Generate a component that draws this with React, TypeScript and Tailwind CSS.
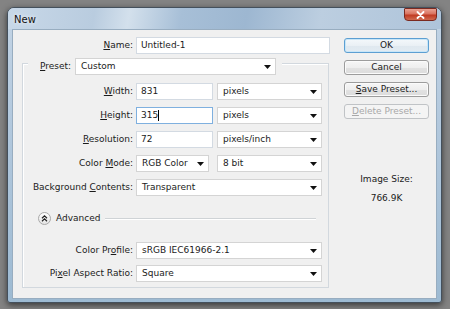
import React from "react";

function Tri() {
  return (
    <svg width="7" height="4" viewBox="0 0 7 4" className="shrink-0">
      <path d="M0 0H7L3.5 4Z" fill="#111" />
    </svg>
  );
}

function Lbl({ a, u, b, cls }: { a?: string; u: string; b?: string; cls: string }) {
  return (
    <div className={cls}>
      {a}
      <span className="underline underline-offset-[1px]">{u}</span>
      {b}
    </div>
  );
}

function Input({ cls, text, focus }: { cls: string; text: string; focus?: boolean }) {
  return (
    <div
      className={
        cls +
        " h-[17px] bg-white border flex items-center pl-[4px] " +
        (focus ? "border-[#7fb0df]" : "border-[#d3dae2]")
      }
    >
      <span>{text}</span>
      {focus && <span className="w-px h-[11px] bg-black" />}
    </div>
  );
}

function Select({ cls, text }: { cls: string; text: string }) {
  return (
    <div className={cls + " h-[17px] bg-white border border-[#d4d4d4] flex items-center justify-between pl-[5px] pr-[4px]"}>
      <span>{text}</span>
      <Tri />
    </div>
  );
}

function Btn({ children, variant }: { children: React.ReactNode; variant?: "default" | "disabled" }) {
  const base =
    "w-[85px] h-[15px] rounded-[3px] border flex items-center justify-center leading-none ";
  if (variant === "default")
    return (
      <div className={base + "border-[#5c9fd2] bg-[linear-gradient(#f4f8fb_0%,#eaf0f5_50%,#dfe8ef_51%,#e2ebf2_100%)] shadow-[inset_0_0_0_1px_#c8e6f8]"}>
        {children}
      </div>
    );
  if (variant === "disabled")
    return <div className={base + "border-[#c0c3c6] bg-[#f4f4f4] text-[#a8a8a8]"}>{children}</div>;
  return (
    <div className={base + "border-[#9c9c9c] bg-[linear-gradient(#f6f6f6_0%,#eeeeee_50%,#e2e2e2_51%,#dcdcdc_100%)] shadow-[inset_0_0_0_1px_#fbfbfb]"}>
      {children}
    </div>
  );
}

export default function App() {
  return (
    <div className="w-[450px] h-[309px] bg-[#838383] pt-[7px] pl-[7px] font-['DejaVu_Sans',sans-serif] text-[9px] text-[#1b1b1b] overflow-hidden">
      <div className="w-[435px] h-[296px] rounded-t-[7px] rounded-b-[3px] border border-[#44505c] bg-[linear-gradient(180deg,#c3d4e5_0%,#b2c8dd_40%,#9dbad2_100%)] shadow-[0_2px_6px_rgba(0,0,0,0.6)] flex flex-col px-[4px] pb-[3px]">
        {/* title bar */}
        <div className="h-[21px] -mx-[4px] px-[4px] rounded-t-[6px] bg-[linear-gradient(100deg,#c8d8e8_0%,#b9ccdf_20%,#d3e0ec_28%,#a7bfd7_40%,#9db7d1_55%,#bccee0_72%,#aec4da_100%)] flex items-start justify-between">
          <div className="pl-[2px] pt-[4px] text-[10px] text-[#111] [text-shadow:0_0_4px_#fff]">New</div>
          <div className="w-[33px] h-[13px] rounded-b-[4px] rounded-t-[1px] border border-[#7a2a20] bg-[linear-gradient(#eaa292_0%,#d9735f_45%,#c03a22_55%,#cf6a4f_100%)] flex items-center justify-center">
            <svg width="9" height="8" viewBox="0 0 9 8">
              <path d="M1.5 1L7.5 7M7.5 1L1.5 7" stroke="#fff" strokeWidth="1.8" strokeLinecap="round" />
            </svg>
          </div>
        </div>
        {/* content */}
        <div className="flex-1 bg-[#f0f0f0] border border-[#98adc0] flex flex-row">
          {/* left column */}
          <div className="w-[317px] flex flex-col">
            <div className="mt-[7px] flex items-center h-[17px]">
              <Lbl u="N" b="ame:" cls="w-[120px] text-right" />
              <Input cls="ml-[3px] w-[194px]" text="Untitled-1" />
            </div>
            <div className="mt-[9px] ml-[9px] w-[307px] h-[225px] border border-[#d2d8de] shadow-[inset_1px_1px_0_#fff] flex flex-col">
              <div className="-mt-[6px] ml-[5px] w-fit bg-[#f0f0f0] pl-[12px] pr-[6px] flex items-center">
                <Lbl u="P" b="reset:" cls="w-[35px]" />
                <Select cls="w-[201px]" text="Custom" />
              </div>
              <div className="mt-[8px] flex flex-col gap-[7px]">
                <div className="flex items-center h-[17px]">
                  <Lbl u="W" b="idth:" cls="w-[110px] text-right" />
                  <Input cls="ml-[3px] w-[77px]" text="831" />
                  <Select cls="ml-[4px] w-[105px]" text="pixels" />
                </div>
                <div className="flex items-center h-[17px]">
                  <Lbl u="H" b="eight:" cls="w-[110px] text-right" />
                  <Input cls="ml-[3px] w-[77px]" text="315" focus />
                  <Select cls="ml-[4px] w-[105px]" text="pixels" />
                </div>
                <div className="flex items-center h-[17px]">
                  <Lbl u="R" b="esolution:" cls="w-[110px] text-right" />
                  <Input cls="ml-[3px] w-[77px]" text="72" />
                  <Select cls="ml-[4px] w-[105px]" text="pixels/inch" />
                </div>
                <div className="flex items-center h-[17px]">
                  <Lbl a="Color " u="M" b="ode:" cls="w-[110px] text-right" />
                  <Select cls="ml-[3px] w-[73px]" text="RGB Color" />
                  <Select cls="ml-[8px] w-[105px]" text="8 bit" />
                </div>
                <div className="flex items-center h-[17px]">
                  <Lbl a="Background " u="C" b="ontents:" cls="w-[110px] text-right" />
                  <Select cls="ml-[3px] w-[186px]" text="Transparent" />
                </div>
              </div>
              <div className="mt-[15px] h-[15px] flex items-center">
                <div className="ml-[15px] w-[13px] h-[13px] rounded-full border border-[#a9a9a9] bg-[linear-gradient(#ffffff,#e4e4e4)] flex items-center justify-center">
                  <svg width="7" height="7" viewBox="0 0 7 7">
                    <path d="M1 3.2L3.5 0.9L6 3.2M1 6.2L3.5 3.9L6 6.2" stroke="#222" strokeWidth="1.2" fill="none" />
                  </svg>
                </div>
                <span className="ml-[5px]">Advanced</span>
                <div className="ml-[5px] mr-[12px] flex-1 h-[2px] border-t border-[#cfd3d6] border-b border-b-white" />
              </div>
              <div className="mt-[16px] flex flex-col gap-[6px]">
                <div className="flex items-center h-[17px]">
                  <Lbl a="Color Pr" u="o" b="file:" cls="w-[110px] text-right" />
                  <Select cls="ml-[3px] w-[186px]" text="sRGB IEC61966-2.1" />
                </div>
                <div className="flex items-center h-[17px]">
                  <Lbl a="Pi" u="x" b="el Aspect Ratio:" cls="w-[110px] text-right" />
                  <Select cls="ml-[3px] w-[186px]" text="Square" />
                </div>
              </div>
            </div>
          </div>
          {/* right column */}
          <div className="ml-[14px] w-[85px] flex flex-col">
            <div className="mt-[8px] flex flex-col gap-[7px]">
              <Btn variant="default">OK</Btn>
              <Btn>Cancel</Btn>
              <Btn>
                <span className="underline">S</span>ave Preset...
              </Btn>
              <Btn variant="disabled">
                <span className="underline">D</span>elete Preset...
              </Btn>
            </div>
            <div className="mt-[54px] h-[12px] leading-[12px] text-center">Image Size:</div>
            <div className="mt-[7px] h-[12px] leading-[12px] text-center">766.9K</div>
          </div>
        </div>
      </div>
    </div>
  );
}
